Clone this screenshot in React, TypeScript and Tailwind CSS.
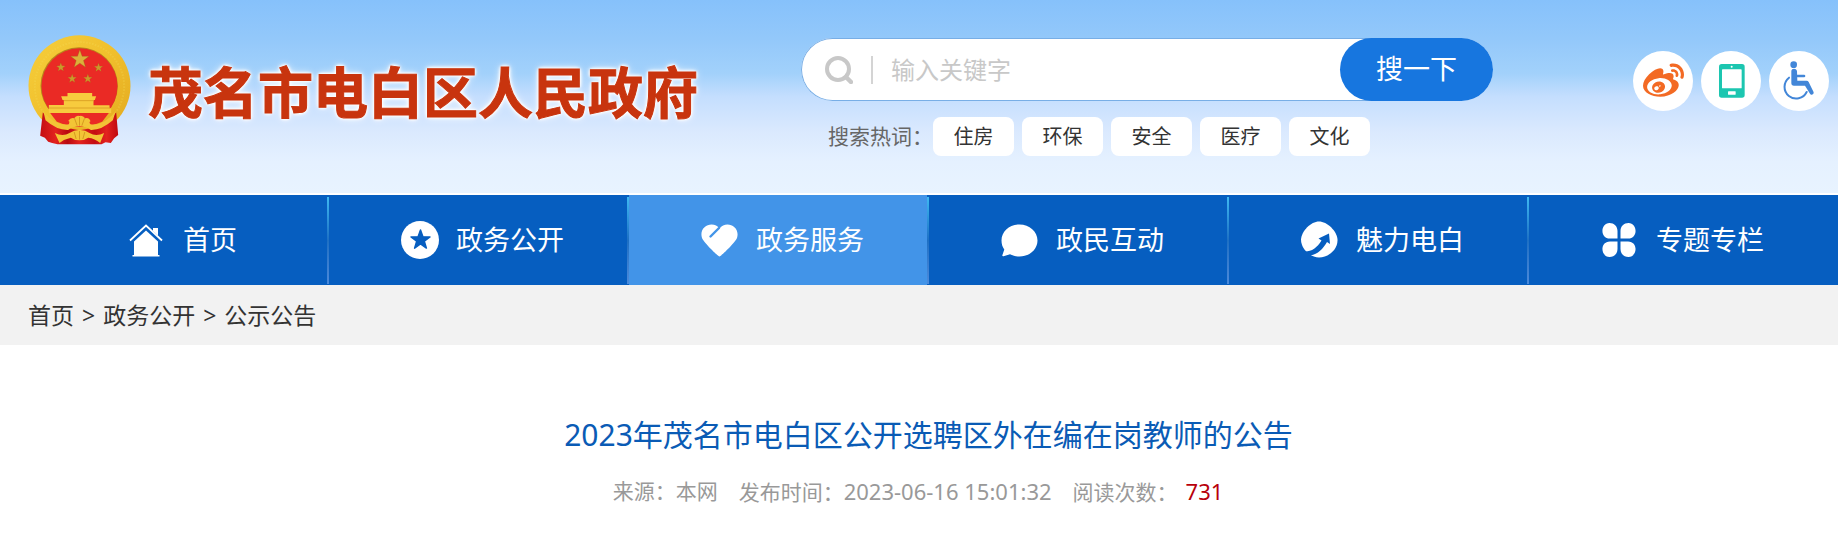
import React from "react";
import { FaWeibo } from "react-icons/fa";

const hotWords = ["住房", "环保", "安全", "医疗", "文化"];

const STAR = "0,-10 2.4,-3.2 9.5,-3.1 3.8,1.2 5.9,8.1 0,4 -5.9,8.1 -3.8,1.2 -9.5,-3.1 -2.4,-3.2";

const Emblem: React.FC = () => (
  <svg viewBox="26 20 308 330" className="h-[110px] w-[103px] shrink-0" aria-hidden="true">
    <defs>
      <linearGradient id="gold" x1="0" y1="0" x2="1" y2="1">
        <stop offset="0" stopColor="#f6cf3c" />
        <stop offset="0.5" stopColor="#f0bf2c" />
        <stop offset="1" stopColor="#e3a91f" />
      </linearGradient>
      <linearGradient id="drape" x1="0" y1="0" x2="1" y2="0">
        <stop offset="0" stopColor="#c40d12" />
        <stop offset="0.2" stopColor="#e3231f" />
        <stop offset="0.35" stopColor="#b80a10" />
        <stop offset="0.5" stopColor="#e3231f" />
        <stop offset="0.7" stopColor="#c40d12" />
        <stop offset="0.85" stopColor="#e3231f" />
        <stop offset="1" stopColor="#c0090f" />
      </linearGradient>
    </defs>
    <ellipse cx="180" cy="172" rx="153" ry="151" fill="url(#gold)" />
    <ellipse cx="180" cy="174" rx="134" ry="133" fill="none" stroke="#f9de5c" strokeWidth="6" strokeDasharray="5 4" opacity="0.25" />
    <ellipse cx="179" cy="172" rx="116" ry="115" fill="#b8861b" />
    <ellipse cx="180" cy="174" rx="114" ry="114" fill="#ea2a25" />
    <path d="M70 252 C92 280 112 292 140 298 L180 306 L222 298 C250 290 272 278 290 252 L296 320 L284 330 L274 344 L258 342 L246 348 L114 348 L98 344 L86 340 L76 328 L62 322Z" fill="url(#drape)" />
    <path d="M92 254 L268 254 L248 280 Q215 294 180 296 Q145 294 112 280Z" fill="#ea2a25" />
    <g fill="#c99a2b" stroke="#8d6216" strokeWidth="0.3">
      <polygon points={STAR} transform="translate(181 93) scale(2.9)" fill="#dcb03a" />
      <polygon points={STAR} transform="translate(124 117) scale(1.4)" />
      <polygon points={STAR} transform="translate(237 118) scale(1.4)" />
      <polygon points={STAR} transform="translate(158 151) scale(1.4)" />
      <polygon points={STAR} transform="translate(205 151) scale(1.4)" />
    </g>
    <path d="M144 194h74v10h12l-4 11h-4v16h48v9l5 0v14H88v-24h45v-15h-4l-4-11h19z" fill="#f7cb3e" />
    <path d="M133 217h89M88 239h184" stroke="#dda326" strokeWidth="3" />
    <path d="M72 250 Q108 294 148 288 Q152 278 146 278 Q154 266 164 270 Q170 260 180 263 Q190 260 197 270 Q208 266 213 279 Q207 281 213 288 Q250 294 288 250 L280 276 Q246 306 214 305 Q198 294 180 294 Q160 294 146 305 Q112 306 78 276Z" fill="#f3c436" />
    <path d="M106 314 Q130 326 150 314 Q166 304 180 305 Q196 304 210 314 Q230 326 254 314 L242 344 Q226 330 206 328 Q196 336 180 336 Q164 336 154 328 Q134 332 120 344Z" fill="#f3c436" />
    <path d="M180 308v26M164 311l6 21M196 311l-6 21M165 270l8 22M195 270l-8 22M180 266v26" stroke="#cf921c" strokeWidth="2.5" />
  </svg>
);

const TabletIcon: React.FC = () => (
  <svg viewBox="273 63 180 180" className="size-[60px]" aria-hidden="true">
    <rect x="327" y="102" width="77" height="101" rx="8" fill="#1cc6b0" />
    <rect x="336" y="118" width="59" height="57" rx="2" fill="#fff" />
    <rect x="354" y="184" width="23" height="10" rx="1" fill="#fff" />
    <circle cx="365" cy="110" r="3" fill="#fff" />
  </svg>
);

const WheelchairIcon: React.FC = () => (
  <svg viewBox="477 63 180 180" className="size-[60px]" fill="none" stroke="#4286d8" strokeLinecap="round" strokeLinejoin="round" aria-hidden="true">
    <circle cx="551" cy="104" r="10" fill="#4286d8" stroke="none" />
    <path d="M544 124 Q544 116 552 116 Q560 116 561 124 L562 152 H590 Q594 152 596 156 L611 187 Q612 192 606 194 Q602 195 600 191 L585 167 H552 Q544 167 544 159Z" fill="#4286d8" stroke="none" />
    <path d="M562 138H582" strokeWidth="8" />
    <path d="M537 143 A35 35 0 1 0 590 186" strokeWidth="6" />
  </svg>
);

const HomeIcon = (
  <>
    <path d="M18 9.5L30 20.5V34H6V20.5Z" fill="#fff" />
    <path d="M2 19.5L18 4.5L34 19.5" fill="none" stroke="#fff" strokeWidth="1.8" />
    <path d="M25 7h5v7.5l-5-4.5zM4.500 34h27v1.500h-27z" fill="#fff" />
  </>
);

const StarIcon = (
  <>
    <circle cx="19" cy="19" r="19" fill="#fff" />
    <polygon points={STAR} transform="translate(19.500 19)" fill="#065ec0" stroke="#065ec0" strokeWidth="1.5" strokeLinejoin="round" />
  </>
);

const HeartIcon = (
  <>
    <path d="M18.500 35.500C16.500 35 2.500 21 1 17C-1.500 9 4.500 3.500 10.500 3.500C14 3.500 16.500 5 18.500 7.500C20.500 5 23.500 3.500 26.500 3.500C32.500 3.500 38.500 9 36 17C34.500 21 20.500 35 18.500 35.500Z" fill="#fff" />
    <path d="M18 7L9.500 15.500" stroke="#4294e8" strokeWidth="2.4" strokeLinecap="round" />
  </>
);

const BubbleIcon = (
  <path d="M18.500 3.500C28.500 3.500 36.500 10.500 36.500 19.500C36.500 28.500 28.500 35.500 18.500 35.500C15 35.500 12 34.700 9 33.300L2.500 35.300C1.300 35.500 1 34.800 1.600 33.500L3.300 28.500C1.500 26 .5 23 .5 19.500C.5 10.500 8.500 3.500 18.500 3.500Z" fill="#fff" />
);

const CompassIcon = (
  <>
    <path d="M18 .5C26 .5 36 10 36.500 18.500C37 28 28 36.500 18 36.500C9 36 0 28 0 18.500C.5 10 10 .5 18 .5Z" fill="#fff" />
    <path d="M3 30.500C10 31 16 27 20.500 19.500L17.500 17.500L28 12.500L29 23L26 21C22 28 17 33 9.500 34.500Z" fill="#065ec0" />
  </>
);

const CloverIcon = (
  <path d="M16.500 17.500H9C-1.500 17.500-.5 2 8.500 2C13 2 16.500 5 16.500 10ZM19.500 17.500H27C37.500 17.500 36.500 2 27.500 2C23 2 19.500 5 19.500 10ZM16.500 20.500H9C-1.500 20.500-.5 36 8.500 36C13 36 16.500 33 16.500 28ZM19.500 20.500H27C37.500 20.500 36.500 36 27.500 36C23 36 19.500 33 19.500 28Z" fill="#fff" />
);

const navItems = [
  { label: "首页", icon: HomeIcon },
  { label: "政务公开", icon: StarIcon },
  { label: "政务服务", icon: HeartIcon, active: true },
  { label: "政民互动", icon: BubbleIcon },
  { label: "魅力电白", icon: CompassIcon },
  { label: "专题专栏", icon: CloverIcon },
];

const SiteHeader: React.FC = () => (
  <header className="flex items-start border-b-2 border-white bg-[linear-gradient(to_bottom,#86c1fb_0%,#93c8fa_20%,#a2d1fb_38%,#c4defe_50%,#dae9fe_68%,#e5f1ff_84%,#e8f3ff_100%)] pt-[35px] pr-[9px] pb-[37px] pl-7">
    <a href="#" className="flex shrink-0 items-center gap-[17px]">
      <Emblem />
      <span className="pt-1 text-[55px] leading-[60px] font-bold text-[#c8340e] [-webkit-text-stroke:1px_#c8340e] [text-shadow:0_0_2px_#fff,0_0_3px_#fff,0_0_3px_#fff,0_0_4px_#fff,0_0_4px_#fff,0_0_8px_#fff]">茂名市电白区人民政府</span>
    </a>
    <div className="ml-[103px] w-[692px] pt-[3px]">
      <form className="flex h-[63px] rounded-full bg-white" onSubmit={(e) => e.preventDefault()}>
        <label className="flex flex-1 items-center rounded-l-full border border-r-0 border-[#78aee6] pl-[23px]">
          <svg viewBox="0 0 28 28" className="mr-[18px] size-7 shrink-0" fill="none" stroke="#c8c8c8" aria-hidden="true">
            <circle cx="13" cy="13" r="11" strokeWidth="4" />
            <path d="M21 21L26 26" strokeWidth="4.500" strokeLinecap="round" />
          </svg>
          <span className="h-7 w-0.5 shrink-0 bg-[#d4d4d4]" />
          <input type="text" aria-label="输入关键字" placeholder="输入关键字" className="ml-[18px] w-full min-w-0 bg-transparent text-2xl outline-none placeholder:text-[#c8c8c8]" />
        </label>
        <div className="-ml-8 flex">
          <button type="submit" className="w-[153px] rounded-full bg-[#1776df] text-[27px] text-white">搜一下</button>
        </div>
      </form>
      <div className="mt-4 flex items-center gap-2 pl-[27px] text-xl">
        <span className="w-[97px] whitespace-nowrap text-[21px] text-[#666]">搜索热词：</span>
        {hotWords.map((word) => (
          <a key={word} href="#" className="flex h-[39px] w-[81px] items-center justify-center rounded-lg bg-white text-[#333]">{word}</a>
        ))}
      </div>
    </div>
    <div className="mt-4 ml-auto flex gap-2">
      <a href="#" aria-label="微博" className="flex size-[60px] items-center justify-center rounded-full bg-white"><FaWeibo className="size-[41px] text-[#f36a24]" /></a>
      <a href="#" aria-label="手机版" className="rounded-full bg-white"><TabletIcon /></a>
      <a href="#" aria-label="无障碍" className="rounded-full bg-white"><WheelchairIcon /></a>
    </div>
  </header>
);

const MainNav: React.FC = () => (
  <nav className="bg-[#065ec0] pr-[9px] pl-[29px]">
    <ul className="grid h-[90px] grid-cols-6">
      {navItems.map((item, i) => (
        <li key={item.label} className="flex">
          <a href="#" className={`flex flex-1 items-center justify-center gap-[17px] pl-[9px] text-[27px] whitespace-nowrap text-white ${item.active ? "bg-[#4294e8]" : ""}`}>
            <svg viewBox="0 0 38 38" className="size-[38px] shrink-0" aria-hidden="true">{item.icon}</svg>
            {item.label}
          </a>
          <span className={`mt-0.5 mb-px w-0.5 ${i < navItems.length - 1 ? "bg-linear-to-b from-[#3fb9f2] via-[#1e70c4] to-[#4b8ada]" : ""}`} />
        </li>
      ))}
    </ul>
  </nav>
);

const App: React.FC = () => (
  <div className="bg-white font-['Noto_Sans','Noto_Sans_CJK_SC',sans-serif]">
    <SiteHeader />
    <MainNav />
    <div className="flex h-[60px] items-center gap-2 bg-[#f2f2f2] pl-7 text-[23px] text-[#333]">
      <a href="#">首页</a>
      <span>&gt;</span>
      <a href="#">政务公开</a>
      <span>&gt;</span>
      <a href="#">公示公告</a>
    </div>
    <main className="pt-[70px] pr-[9px] pb-10 pl-7 text-center">
      <h1 className="text-[30px] leading-10 text-[#0a5bb5]">2023年茂名市电白区公开选聘区外在编在岗教师的公告</h1>
      <p className="mt-5 flex justify-center text-[21px] leading-8 text-[#999]">
        <span className="mr-[21px]">来源：本网</span>
        <span className="mr-[21px]">发布时间：<span className="text-[22px]">2023-06-16 15:01:32</span></span>
        <span className="mr-[21px]">阅读次数：<span className="ml-2 text-[22px] text-[#b8000b]">731</span></span>
      </p>
    </main>
  </div>
);

export default App;
